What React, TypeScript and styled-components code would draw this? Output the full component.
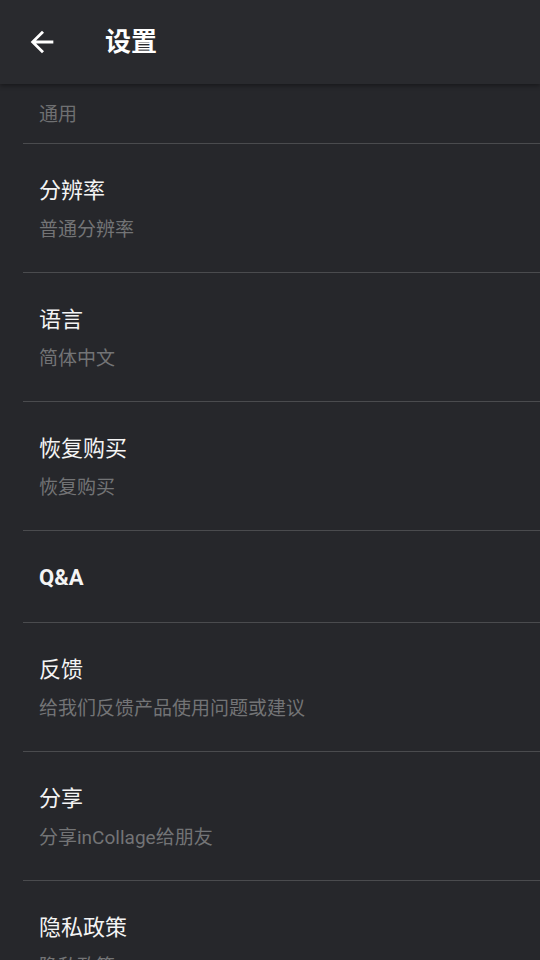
import styled, { createGlobalStyle } from "styled-components"

const GlobalStyle = createGlobalStyle`
  html, body {
    margin: 0;
    padding: 0;
    background: #26272b;
    overflow: hidden;
  }
  body {
    font-family: Roboto, "Noto Sans CJK SC", sans-serif;
    -webkit-font-smoothing: antialiased;
  }
`

const items = [
  { title: "分辨率", sub: "普通分辨率" },
  { title: "语言", sub: "简体中文" },
  { title: "恢复购买", sub: "恢复购买" },
  { title: "Q&A", bold: true },
  { title: "反馈", sub: "给我们反馈产品使用问题或建议" },
  { title: "分享", sub: "分享inCollage给朋友" },
  { title: "隐私政策", sub: "隐私政策" },
]

const App = () => {
  return (
    <Page>
      <GlobalStyle />
      <TopBar>
        <BackButton aria-label="back">
          <svg width="34" height="34" viewBox="0 0 24 24" fill="#ffffff">
            <path d="M20 11H7.83l5.59-5.59L12 4l-8 8 8 8 1.41-1.41L7.83 13H20v-2z" />
          </svg>
        </BackButton>
        <BarTitle>设置</BarTitle>
      </TopBar>

      <SectionLabel>通用</SectionLabel>

      <List>
        {items.map((item) => (
          <Row key={item.title}>
            <RowTitle $bold={item.bold}>{item.title}</RowTitle>
            {item.sub && <RowSub>{item.sub}</RowSub>}
          </Row>
        ))}
      </List>
    </Page>
  )
}

export default App

const Page = styled.div`
  width: 540px;
  height: 960px;
  background: #26272b;
  overflow: hidden;
`

const TopBar = styled.header`
  position: relative;
  z-index: 1;
  height: 84px;
  display: flex;
  align-items: center;
  background: #292a2e;
  box-shadow: 0 2px 4px rgba(0, 0, 0, 0.35);
`

const BackButton = styled.div`
  width: 34px;
  height: 34px;
  margin-left: 25px;
  display: flex;
`

const BarTitle = styled.h1`
  margin: 0 0 0 46px;
  font-size: 26px;
  font-weight: 700;
  color: #ffffff;
  line-height: 34px;
`

const SectionLabel = styled.div`
  padding: 19px 0 16px 39px;
  font-size: 19px;
  line-height: 24px;
  color: #6f7072;
`

const List = styled.div`
  margin-left: 23px;
`

const Row = styled.div`
  border-top: 1px solid #4a4b4e;
  padding: 33px 16px 30px;
  display: flex;
  flex-direction: column;
`

const RowTitle = styled.div<{ $bold?: boolean }>`
  font-size: 22px;
  line-height: 28px;
  color: #f4f4f4;
  font-weight: ${(p) => (p.$bold ? 700 : 400)};
`

const RowSub = styled.div`
  margin-top: 13px;
  font-size: 19px;
  line-height: 24px;
  color: #737476;
`
